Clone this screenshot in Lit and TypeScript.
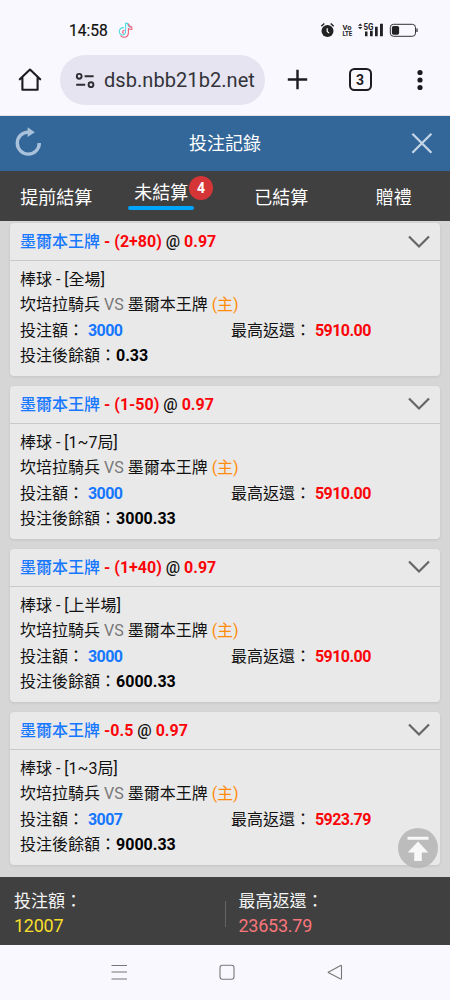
import { LitElement, html, css } from "lit";
import { customElement, property } from "lit/decorators.js";

interface Bet {
  pick: string;
  odds: string;
  period: string;
  stake: string;
  payout: string;
  balance: string;
}

const BETS: Bet[] = [
  { pick: "- (2+80)", odds: "0.97", period: "全場", stake: "3000", payout: "5910.00", balance: "0.33" },
  { pick: "- (1-50)", odds: "0.97", period: "1~7局", stake: "3000", payout: "5910.00", balance: "3000.33" },
  { pick: "- (1+40)", odds: "0.97", period: "上半場", stake: "3000", payout: "5910.00", balance: "6000.33" },
  { pick: "-0.5", odds: "0.97", period: "1~3局", stake: "3007", payout: "5923.79", balance: "9000.33" },
];

@customElement("status-bar")
class StatusBar extends LitElement {
  static styles = css`
    :host { display: flex; height: 45px; padding: 15px 31px 0 69px; box-sizing: border-box; }
    .time { font-size: 15.6px; line-height: 32px; color: #111; font-weight: 400; width: 49px; -webkit-text-stroke: 0.2px #111; }
    svg { display: block; }
    .signals { margin-left: auto; }
    text { font-family: Roboto, sans-serif; font-weight: 700; fill: #222; }
  `;
  render() {
    return html`
      <span class="time">14:58</span>
      <svg width="16" height="30" viewBox="118 15 16 30" fill="none" stroke-width="1.1">
        <path d="M123.900 27.600c-2.800 0-4.600 1.800-4.600 4.200 0 3 4 4.300 5.700 1.900.6-.9.600-2 .6-3.500v-6.800h2c.2 2.100 1.600 3.600 3.700 3.900" stroke="#4fdcdf"/>
        <path d="M128.400 23.700c.3 1.900 1.500 3.100 3.400 3.300v2.500c-1.400 0-2.500-.3-3.400-1v4c0 2.800-1.900 4.700-4.500 4.700-1.600 0-2.800-.7-3.500-1.700M124.600 30.400c-2.200-.1-2.800 2.600-.8 3.200" stroke="#f0607a"/>
      </svg>
      <svg class="signals" width="99" height="30" viewBox="320 15 99 30">
        <circle cx="327.500" cy="31" r="6" fill="#222"/>
        <path d="M321.300 26.300l3-2.800M333.700 26.300l-3-2.800" stroke="#222" stroke-width="1.500"/>
        <path d="M327.200 28.200v3.300l1.900 1.600" fill="none" stroke="#fff" stroke-width="1.200"/>
        <text x="342.400" y="29.800" font-size="8" textLength="9" lengthAdjust="spacingAndGlyphs">Vo</text>
        <text x="342.400" y="36.200" font-size="8" textLength="9.800" lengthAdjust="spacingAndGlyphs">LTE</text>
        <path d="M358 25.800l2.200-2.200 2.200 2.200zM358 27l2.200 2.200 2.200-2.200z" fill="#222"/>
        <text x="363.400" y="29.700" font-size="8.800" textLength="10" lengthAdjust="spacingAndGlyphs">5G</text>
        <path d="M365 31.500h2.500v4.700H365zM370 30.700h2.700v5.500H370zM375 26.700h2.700v9.500H375zM380 23.800h2.900v12.400H380z" fill="#222"/>
        <rect x="390.300" y="24.300" width="25.200" height="12" rx="3.200" fill="none" stroke="#333" stroke-width="1"/>
        <rect x="391.900" y="25.900" width="7.200" height="8.800" rx="1.600" fill="#222"/>
        <path d="M417 28.600v3.400" stroke="#333" stroke-width="1.300"/>
      </svg>
    `;
  }
}

@customElement("browser-bar")
class BrowserBar extends LitElement {
  static styles = css`
    :host { display: flex; align-items: center; height: 71px; padding: 0 20px 1px 17px; box-sizing: border-box; border-bottom: 1px solid #e4e3ec; }
    svg { display: block; flex: none; }
    .address { display: flex; align-items: center; width: 205px; height: 50px; border-radius: 25px; background: #e5e4f0; margin-left: 17px; box-sizing: border-box; padding-left: 15px; }
    .url { font-size: 20px; margin-left: 9px; color: #33333a; letter-spacing: 0.06px; line-height: 24px; white-space: nowrap; }
    .plus { margin-left: 22px; }
    .tabs { margin-left: 40.500px; width: 23px; height: 23px; box-sizing: border-box; border: 2.400px solid #1c1b20; border-radius: 5.500px; font-size: 14px; line-height: 18px; font-weight: 700; display: grid; place-items: center; color: #1c1b20; }
    .more { margin-left: auto; }
  `;
  render() {
    return html`
      <svg width="26" height="26" viewBox="17 67 26 26" fill="none" stroke="#1c1b20" stroke-width="2.100" stroke-linejoin="round" stroke-linecap="round">
        <path d="M19.800 79.300L30 69.500l10.200 9.800M22.400 77.500v12.200h15.200V77.500"/>
      </svg>
      <div class="address">
        <svg width="20" height="16" viewBox="75 71 20 16" fill="none" stroke="#2d2c33" stroke-width="1.900">
          <circle cx="79.200" cy="75.300" r="2.400"/><circle cx="91" cy="83.700" r="2.400"/>
          <path d="M84.600 75.300h9M76.200 83.700h9"/>
        </svg>
        <span class="url">dsb.nbb21b2.net</span>
      </div>
      <svg class="plus" width="21" height="21" viewBox="0 0 21 21" stroke="#1c1b20" stroke-width="2.400"><path d="M10.500 .8v19.400M.8 10.500h19.400"/></svg>
      <div class="tabs">3</div>
      <svg class="more" width="20" height="22" viewBox="0 0 20 22" fill="#1c1b20"><circle cx="10" cy="3.500" r="2.600"/><circle cx="10" cy="11" r="2.600"/><circle cx="10" cy="18.500" r="2.600"/></svg>
    `;
  }
}

@customElement("bet-card")
class BetCard extends LitElement {
  @property({ attribute: false }) bet!: Bet;
  static styles = css`
    :host { display: block; height: 152.600px; background: #e9e9e9; border-radius: 4px; box-shadow: 0 1px 3px rgba(0, 0, 0, 0.09); font-size: 16px; color: #111; white-space: nowrap; }
    .head { display: flex; align-items: center; justify-content: space-between; height: 38px; padding: 0 10px; box-sizing: border-box; border-bottom: 1px solid #c9c9c9; font-weight: 500; }
    .name { padding-bottom: 3px; }
    .team { color: #1677ff; }
    .red { color: #fb0509; font-weight: 700; }
    .body { padding: 5.800px 10px 0; }
    .line { display: flex; height: 25.400px; line-height: 25.400px; white-space: pre; }
    .half { width: 211px; flex: none; }
    .vs { color: #777; }
    .home { color: #ff8c0a; }
    .stake { color: #1677ff; font-weight: 700; }
    .tight { letter-spacing: -0.550px; }
    .total { color: #000; font-weight: 700; }
    svg { display: block; }
  `;
  render() {
    const b = this.bet;
    return html`
      <div class="head">
        <span class="name"><span class="team">墨爾本王牌</span> <span class="red">${b.pick}</span> @ <span class="red">${b.odds}</span></span>
        <svg width="22" height="14" viewBox="0 0 22 14" fill="none" stroke="#666" stroke-width="2.200"><path d="M1 1.500l10 10 10-10"/></svg>
      </div>
      <div class="body">
        <div class="line">棒球 - [${b.period}]</div>
        <div class="line"><span>坎培拉騎兵 <span class="vs">VS</span> 墨爾本王牌 <span class="home">(主)</span></span></div>
        <div class="line"><span class="half">投注額： <span class="stake tight">${b.stake}</span></span><span>最高返還： <span class="red tight">${b.payout}</span></span></div>
        <div class="line"><span>投注後餘額：<span class="total">${b.balance}</span></span></div>
      </div>
    `;
  }
}

@customElement("app-root")
class AppRoot extends LitElement {
  static styles = css`
    :host { display: flex; flex-direction: column; width: 450px; height: 1000px; overflow: hidden; background: #f9f8ff; font-family: Roboto, "Noto Sans CJK TC", sans-serif; }
    svg { display: block; }
    .title { display: grid; grid-template-columns: 60px 1fr 60px; align-items: center; height: 55px; flex: none; background: #336799; color: #fff; font-size: 18px; text-align: center; }
    .heading { padding-bottom: 3px; }
    .refresh { margin-left: 14px; }
    .close { margin-left: 20px; }
    .tabs { display: grid; grid-template-columns: repeat(4, 112.500px); height: 50px; flex: none; background: #404040; color: #fff; font-size: 18px; text-align: center; line-height: 53px; }
    .active { position: relative; line-height: 43px; padding-right: 15px; }
    .underline { width: 66px; height: 4px; border-radius: 2px; background: #00a5fc; margin: -8px auto 0; }
    .badge { position: absolute; left: 76.500px; top: 5px; width: 24px; height: 24px; border-radius: 50%; background: #d63538; font-size: 14px; line-height: 24px; font-weight: 700; }
    .list { position: relative; display: flex; flex-direction: column; gap: 10.400px; height: 656px; flex: none; box-sizing: border-box; padding: 2px 10px 0; background: #d6d6d6; }
    .top { position: absolute; right: 12.500px; bottom: 9px; }
    .totals { display: flex; align-items: center; height: 68px; flex: none; background: #404040; color: #f4f4f4; font-size: 17px; }
    .total { width: 225px; box-sizing: border-box; padding: 5px 0 0 14px; line-height: 24.500px; }
    .total + .sep + .total { padding-left: 13px; }
    .sep { width: 1px; height: 26px; margin-top: 6px; background: #646464; }
    .num { font-size: 18px; letter-spacing: -0.25px; }
    .yellow { color: #f7df2b; }
    .pink { color: #f8757b; }
    .nav { display: flex; justify-content: space-between; align-items: center; flex: 1; padding: 0 106px 1px 110px; }
  `;
  render() {
    return html`
      <status-bar></status-bar>
      <browser-bar></browser-bar>
      <div class="title">
        <svg class="refresh" width="30" height="34" viewBox="14 126.500 30 34" fill="none" stroke="#a9c1da" stroke-width="3.400">
          <path d="M39.300 142.600A11 11 0 1 1 28.300 131.600"/>
          <path d="M27.600 126.800l7.200 5-7.200 4.800z" fill="#a9c1da" stroke="none"/>
        </svg>
        <span class="heading">投注記錄</span>
        <svg class="close" width="24" height="24" viewBox="0 0 24 24" stroke="#c3d5e7" stroke-width="2.300"><path d="M2.400 1.700l19 19M21.400 1.700l-19 19"/></svg>
      </div>
      <div class="tabs">
        <div>提前結算</div>
        <div class="active">未結算<div class="underline"></div><span class="badge">4</span></div>
        <div>已結算</div>
        <div>贈禮</div>
      </div>
      <div class="list">
        ${BETS.map((b) => html`<bet-card .bet=${b}></bet-card>`)}
        <svg class="top" width="40" height="40" viewBox="0 0 40 40">
          <circle cx="20" cy="20" r="20" fill="#b7b7b7" fill-opacity=".9"/>
          <path d="M9.500 8.800h21v3h-21zM20 13.500l10.300 11h-6.500V33h-7.600v-8.500H9.700z" fill="#f8f8f8"/>
        </svg>
      </div>
      <div class="totals">
        <div class="total">投注額：<div class="num yellow">12007</div></div>
        <div class="sep"></div>
        <div class="total">最高返還：<div class="num pink">23653.79</div></div>
      </div>
      <div class="nav">
        <svg width="18" height="18" viewBox="0 0 18 18" stroke="#777" stroke-width="1.200"><path d="M1.500 2.500h15.500M1.500 9h15.500M1.500 16h15.500"/></svg>
        <svg width="18" height="18" viewBox="0 0 18 18" fill="none" stroke="#777" stroke-width="1.100"><rect x="2" y="2.200" width="14" height="14" rx="2.500"/></svg>
        <svg width="18" height="18" viewBox="0 0 18 18" fill="none" stroke="#777" stroke-width="1.100" stroke-linejoin="round"><path d="M2.200 9.200L14.700 2.500Q15.500 2.200 15.500 3v12.500q0 .8-.8.400L2.200 9.500z"/></svg>
      </div>
    `;
  }
}
